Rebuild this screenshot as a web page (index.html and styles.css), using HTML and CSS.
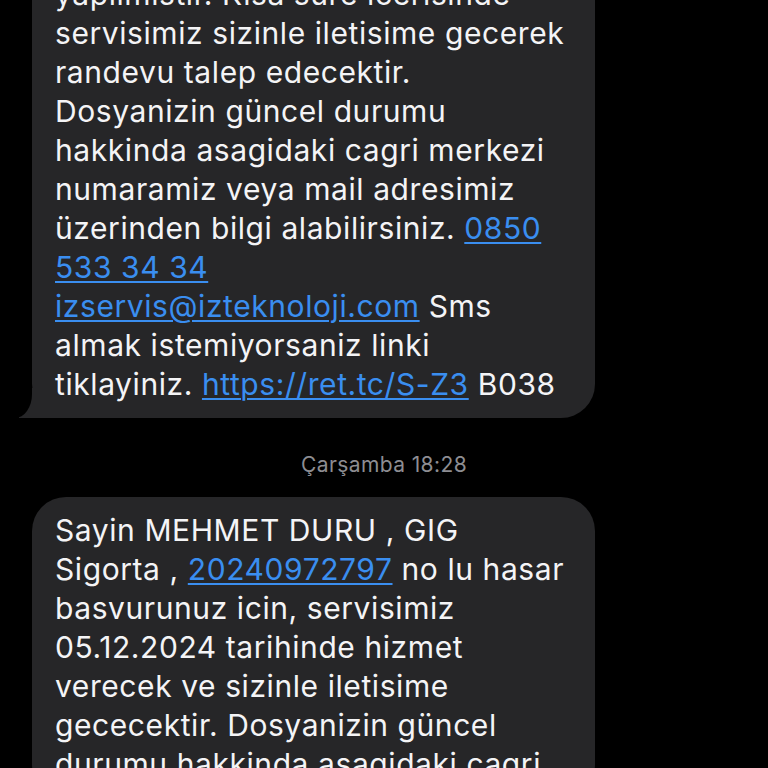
FILE: index.html
```html
<!DOCTYPE html>
<html lang="tr">
<head>
<meta charset="utf-8">
<link rel="stylesheet" href="styles.css">
</head>
<body>
<div class="thread">
  <div class="bubble tail">
    <p class="msg">yapilmistir. Kisa süre icerisinde<br>servisimiz sizinle iletisime gecerek<br>randevu talep edecektir.<br>Dosyanizin güncel durumu<br>hakkinda asagidaki cagri merkezi<br>numaramiz veya mail adresimiz<br>üzerinden bilgi alabilirsiniz. <a class="link">0850<br>533 34 34</a><br><a class="link">izservis@izteknoloji.com</a> Sms<br>almak istemiyorsaniz linki<br>tiklayiniz. <a class="link">https://ret.tc/S-Z3</a> B038</p>
  </div>
  <div class="stamp">Çarşamba 18:28</div>
  <div class="bubble">
    <p class="msg">Sayin MEHMET DURU , GIG<br>Sigorta , <a class="link">20240972797</a> no lu hasar<br>basvurunuz icin, servisimiz<br>05.12.2024 tarihinde hizmet<br>verecek ve sizinle iletisime<br>gececektir. Dosyanizin güncel<br>durumu hakkinda asagidaki cagri</p>
  </div>
</div>
</body>
</html>
```
FILE: styles.css
```css
html, body {
  margin: 0;
  padding: 0;
  background: #000;
  height: 768px;
  overflow: hidden;
}
.thread {
  display: flex;
  flex-direction: column;
  align-items: flex-start;
  margin-top: -39px;
  padding-left: 32px;
  font-family: Inter, "Noto Sans", sans-serif;
}
.bubble {
  position: relative;
  width: 563px;
  box-sizing: border-box;
  background: #262628;
  border-radius: 34px;
  padding: 14px 18px 14px 23px;
}
.tail::before {
  content: "";
  position: absolute;
  left: -13px;
  bottom: 0;
  width: 53px;
  height: 30px;
  background: #262628;
}
.tail::after {
  content: "";
  position: absolute;
  left: -32px;
  bottom: 0;
  width: 32px;
  height: 32px;
  background: #000;
  border-bottom-right-radius: 17px 24px;
}
.msg {
  margin: 0;
  color: #f4f4f6;
  font-size: 30px;
  line-height: 39px;
  letter-spacing: 0.58px;
  position: relative;
  z-index: 1;
}
.link {
  color: #3a8ef0;
  text-decoration: underline;
  text-decoration-thickness: 2px;
  text-underline-offset: 3px;
}
.stamp {
  align-self: stretch;
  margin-left: -32px;
  text-align: center;
  color: #8d8d92;
  font-size: 21px;
  line-height: 24px;
  letter-spacing: 0.4px;
  padding: 35px 0 20px;
}
```
